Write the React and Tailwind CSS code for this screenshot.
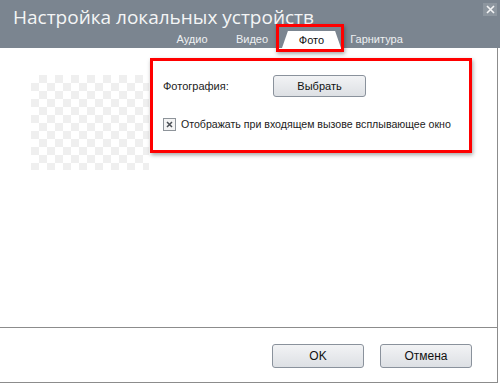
export default function App() {
  const tabs = [
    { label: "Аудио", w: "w-[60px]" },
    { label: "Видео", w: "w-[60px]" },
    { label: "Фото", w: "w-[59px]", active: true },
    { label: "Гарнитура", w: "w-[71px]" },
  ];

  return (
    <div
      className="relative w-[500px] h-[384px] bg-white overflow-hidden"
      style={{ fontFamily: '"Liberation Sans", Arial, sans-serif' }}
    >
      {/* Header */}
      <div className="relative h-[48px] bg-[#7b8590]">
        <div className="pl-[13px] pt-[4px] text-[19px] leading-[26px] text-[#f4f5f6]" style={{ fontFamily: '"Open Sans", "Noto Sans", sans-serif' }}>
          Настройка локальных устройств
        </div>
        <div className="absolute right-[3px] top-[3px] w-[14px] h-[13px] bg-[#8d969f] flex items-center justify-center">
          <svg width="9" height="9" viewBox="0 0 9 9">
            <path d="M1 1L8 8M8 1L1 8" stroke="#f4f5f6" strokeWidth="1.6" />
          </svg>
        </div>
        <div className="absolute left-[162px] bottom-0 flex items-end h-[18px]">
          {tabs.map(t =>
            t.active ? (
              <div
                key={t.label}
                className={`${t.w} h-[17px] bg-white text-[#111] text-[11px] flex items-center justify-center pt-[1px] [clip-path:polygon(10%_0,90%_0,100%_100%,0_100%)]`}
              >
                {t.label}
              </div>
            ) : (
              <div key={t.label} className={`${t.w} h-[17px] flex items-center justify-center text-[11px] text-[#eef0f2]`}>
                {t.label}
              </div>
            )
          )}
        </div>
      </div>

      {/* Red highlight on tab */}
      <div className="absolute left-[276px] top-[24px] w-[68px] h-[28px] border-[3px] border-[#f00] shadow-[1px_2px_4px_rgba(0,0,0,0.35)]" />

      {/* Body */}
      <div className="flex h-[279px] border-r border-[#8c8c8c] mr-[2px]">
        <div className="ml-[31px] mt-[27px] w-[118px] h-[95px] bg-[conic-gradient(#efefef_25%,#ffffff_0_50%,#efefef_0_75%,#ffffff_0)] bg-[length:16px_16px]" />
        <div className="mt-[10px] ml-[1px] w-[322px] h-[95px] border-[3px] border-[#f00] shadow-[1px_2px_4px_rgba(0,0,0,0.35)] pl-[10px] pt-[14px]">
          <div className="flex items-center">
            <div className="w-[110px] text-[11px] text-[#222]">Фотография:</div>
            <button className="w-[93px] h-[22px] rounded-[3px] border border-[#8a929c] bg-gradient-to-b from-[#f2f3f5] to-[#dde0e4] text-[11px] text-[#111]">
              Выбрать
            </button>
          </div>
          <div className="flex items-center mt-[20px]">
            <div className="w-[13px] h-[13px] border border-[#8e949a] bg-[#f4f4f4] flex items-center justify-center">
              <svg width="7" height="7" viewBox="0 0 7 7">
                <path d="M1 1L6 6M6 1L1 6" stroke="#4a4f55" strokeWidth="1.5" />
              </svg>
            </div>
            <div className="ml-[5px] text-[10.6px] text-[#222] whitespace-nowrap">Отображать при входящем вызове всплывающее окно</div>
          </div>
        </div>
      </div>

      {/* Footer */}
      <div className="h-[56px] border-t border-b border-r border-[#8c8c8c] mr-[2px] flex items-center justify-end gap-[16px] pr-[25px] pt-[2px]">
        <button className="w-[92px] h-[24px] rounded-[3px] border border-[#8a929c] bg-gradient-to-b from-[#f2f3f5] to-[#dde0e4] text-[12px] text-[#111]">
          OK
        </button>
        <button className="w-[92px] h-[24px] rounded-[3px] border border-[#8a929c] bg-gradient-to-b from-[#f2f3f5] to-[#dde0e4] text-[12px] text-[#111]">
          Отмена
        </button>
      </div>
    </div>
  );
}
